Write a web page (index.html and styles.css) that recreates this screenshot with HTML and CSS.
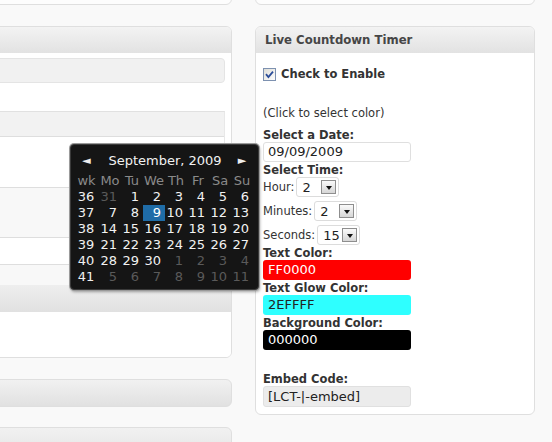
FILE: index.html
```html
<!DOCTYPE html>
<html>
<head>
<meta charset="utf-8">
<link rel="stylesheet" href="styles.css">
</head>
<body>
<div class="page">
  <div class="col col-left">
    <div class="panel panel-stub"></div>
    <div class="panel panel-b">
      <div class="panel-head"></div>
      <div class="panel-inner">
        <div class="field-box"></div>
        <div class="grid-table">
          <div class="gt-head"></div>
          <div class="gt-row r1"></div>
          <div class="gt-row r2 alt"></div>
          <div class="gt-row r3"></div>
          <div class="gt-row r4 alt"></div>
        </div>
      </div>
      <div class="panel-subhead"></div>
      <div class="panel-foot"></div>
    </div>
    <div class="panel panel-closed"></div>
    <div class="panel panel-closed panel-last"></div>
  </div>
  <div class="col col-right">
    <div class="panel panel-stub"></div>
    <div class="panel panel-timer">
      <div class="panel-head"><h3>Live Countdown Timer</h3></div>
      <div class="timer-body">
        <label class="check-row">
          <svg class="cb" width="13" height="13" viewBox="0 0 13 13">
            <defs><linearGradient id="cbg" x1="0" y1="0" x2="1" y2="1"><stop offset="0" stop-color="#dcdcd6"/><stop offset="1" stop-color="#ffffff"/></linearGradient></defs>
            <rect x="0.5" y="0.5" width="12" height="12" fill="url(#cbg)" stroke="#7d91b0"/>
            <path d="M3 6.2 L5.4 9 L10 3.6" fill="none" stroke="#2b4d99" stroke-width="1.8"/>
          </svg>
          <span>Check to Enable</span>
        </label>
        <p class="hint">(Click to select color)</p>
        <div class="lbl lbl-date">Select a Date:</div>
        <div class="txt">09/09/2009</div>
        <div class="lbl lbl-time">Select Time:</div>
        <div class="sel-row">
          <span class="sel-lbl">Hour:</span>
          <span class="sel"><span class="sel-val">2</span><span class="sel-btn"></span></span>
        </div>
        <div class="sel-row sel-gap">
          <span class="sel-lbl">Minutes:</span>
          <span class="sel"><span class="sel-val">2</span><span class="sel-btn"></span></span>
        </div>
        <div class="sel-row sel-gap">
          <span class="sel-lbl">Seconds:</span>
          <span class="sel"><span class="sel-val">15</span><span class="sel-btn"></span></span>
        </div>
        <div class="lbl lbl-c">Text Color:</div>
        <div class="txt swatch red">FF0000</div>
        <div class="lbl lbl-c">Text Glow Color:</div>
        <div class="txt swatch cyan">2EFFFF</div>
        <div class="lbl lbl-c">Background Color:</div>
        <div class="txt swatch black">000000</div>
        <div class="lbl lbl-embed">Embed Code:</div>
        <div class="txt embed">[LCT-|-embed]</div>
      </div>
    </div>
  </div>
</div>

<div class="datepicker">
  <div class="dp-title">
    <span class="dp-nav">&#9668;</span>
    <span class="dp-month">September, 2009</span>
    <span class="dp-nav">&#9658;</span>
  </div>
  <div class="dp-grid">
    <span class="h">wk</span><span class="h">Mo</span><span class="h">Tu</span><span class="h">We</span><span class="h">Th</span><span class="h">Fr</span><span class="h">Sa</span><span class="h">Su</span>

    <span class="wk">36</span><span class="d o">31</span><span class="d">1</span><span class="d">2</span><span class="d">3</span><span class="d">4</span><span class="d">5</span><span class="d">6</span>
    <span class="wk">37</span><span class="d">7</span><span class="d">8</span><span class="d sel-day">9</span><span class="d">10</span><span class="d">11</span><span class="d">12</span><span class="d">13</span>
    <span class="wk">38</span><span class="d">14</span><span class="d">15</span><span class="d">16</span><span class="d">17</span><span class="d">18</span><span class="d">19</span><span class="d">20</span>
    <span class="wk">39</span><span class="d">21</span><span class="d">22</span><span class="d">23</span><span class="d">24</span><span class="d">25</span><span class="d">26</span><span class="d">27</span>
    <span class="wk">40</span><span class="d">28</span><span class="d">29</span><span class="d">30</span><span class="d o">1</span><span class="d o">2</span><span class="d o">3</span><span class="d o">4</span>
    <span class="wk">41</span><span class="d o">5</span><span class="d o">6</span><span class="d o">7</span><span class="d o">8</span><span class="d o">9</span><span class="d o">10</span><span class="d o">11</span>
  </div>
</div>
</body>
</html>
```
FILE: styles.css
```css
html, body {
  margin: 0;
  padding: 0;
}
body {
  background: #f9f9f9;
  font-family: "DejaVu Sans", Verdana, sans-serif;
  color: #333;
  width: 552px;
  height: 442px;
  overflow: hidden;
  position: relative;
}
.page {
  display: flex;
  gap: 23px;
  margin-left: -20px;
  margin-top: -30px;
}
.col-left { width: 252px; flex: none; }
.col-right { width: 280px; flex: none; }

.panel {
  box-sizing: border-box;
  background: #fff;
  border: 1px solid #dfdfdf;
  border-radius: 6px;
  overflow: hidden;
}
.panel-stub {
  height: 35px;
  background: #fdfdfd;
}
.panel-b, .panel-timer, .panel-closed { margin-top: 21px; }

.panel-head {
  height: 26px;
  background: linear-gradient(#f3f3f3, #e2e2e2);
  box-sizing: border-box;
}
.panel-head h3 {
  margin: 0;
  padding: 0 0 0 9px;
  font-size: 11.7px;
  line-height: 26px;
  font-weight: bold;
  color: #464646;
}

/* left panel */
.panel-inner {
  padding: 5px 6px 0 10px;
}
.field-box {
  height: 25px;
  box-sizing: border-box;
  background: #f1f1f1;
  border: 1px solid #e4e4e4;
  border-radius: 4px;
}
.grid-table {
  margin-top: 28px;
  border-top: 1px solid #e1e1e1;
  border-right: 1px solid #e8e8e8;
}
.gt-head { height: 24px; background: #f2f2f2; }
.gt-row { box-sizing: border-box; border-top: 1px solid #dedede; background: #fff; }
.gt-row.alt { background: #f8f8f8; }
.r1 { height: 51px; }
.r2 { height: 50px; }
.r3 { height: 27px; }
.r4 { height: 21px; }
.panel-subhead {
  height: 27px;
  background: linear-gradient(#eeeeee, #e1e1e1);
}
.panel-foot { height: 45px; background: #fff; }

.panel-closed {
  height: 28px;
  background: linear-gradient(#f1f1f1, #e1e1e1);
}
.panel-closed.panel-last {
  margin-top: 20px;
  height: 40px;
}

/* timer panel */
.timer-body {
  padding: 14px 0 7px 7px;
  font-size: 11.5px;
}
.check-row {
  display: flex;
  align-items: center;
  height: 14px;
  gap: 5px;
  font-weight: bold;
  color: #333;
}
.cb { display: block; flex: none; }
.hint {
  margin: 25px 0 0 0;
  line-height: 14px;
  color: #333;
}
.lbl {
  font-weight: bold;
  line-height: 14px;
  color: #333;
}
.lbl-date { margin-top: 8px; }
.lbl-time { margin-top: 1px; }
.lbl-c { margin-top: 1px; }
.lbl-embed { margin-top: 22px; }

.txt {
  box-sizing: border-box;
  width: 148px;
  height: 20px;
  border: 1px solid #dfdfdf;
  border-radius: 3px;
  background: #fff;
  font-size: 13px;
  line-height: 18px;
  padding-left: 4px;
  color: #222;
}
.swatch { border-color: transparent; }
.red { background: #ff0000; color: #fff; }
.cyan { background: #2effff; color: #222; }
.black { background: #000; color: #fff; }
.embed {
  height: 21px;
  line-height: 19px;
  background: #ececec;
  border-color: #e0e0e0;
  color: #222;
}

.sel-row {
  display: flex;
  align-items: center;
  gap: 2px;
  height: 20px;
}
.sel-gap { margin-top: 4px; }
.sel-lbl { color: #333; }
.sel {
  box-sizing: border-box;
  width: 43px;
  height: 20px;
  border: 1px solid #dcdcdc;
  border-radius: 3px;
  background: #fff;
  display: flex;
  align-items: center;
  justify-content: space-between;
  padding: 0 2px 0 5px;
}
.sel-val {
  font-size: 13px;
  color: #222;
}
.sel-btn {
  box-sizing: border-box;
  width: 15px;
  height: 14px;
  border: 1px solid #8e8e8e;
  background: linear-gradient(#fafafa, #d6d6d6);
  position: relative;
  flex: none;
}
.sel-btn::after {
  content: "";
  position: absolute;
  left: 3.5px;
  top: 5px;
  border-left: 3.5px solid transparent;
  border-right: 3.5px solid transparent;
  border-top: 4px solid #111;
}

/* date picker overlay */
.datepicker {
  position: absolute;
  left: 70px;
  top: 144px;
  width: 189px;
  height: 146px;
  box-sizing: border-box;
  background: #151515;
  border: 1px solid #3a3a3a;
  border-radius: 4px;
  box-shadow: 0 0 0 1px #9a9a9a, 1px 2px 3px rgba(0, 0, 0, 0.35);
  padding: 8px 0 0 3px;
  font-size: 13px;
  color: #f2f2f2;
}
.dp-title {
  display: grid;
  grid-template-columns: 25px 132px 22px;
  height: 16px;
  line-height: 16px;
  margin-bottom: 4px;
}
.dp-nav {
  text-align: center;
  font-size: 11px;
  color: #eee;
}
.dp-month { text-align: center; }
.dp-grid {
  display: grid;
  grid-template-columns: 25px repeat(7, 22px);
  grid-auto-rows: 16px;
  line-height: 16px;
}
.h {
  text-align: center;
  color: #8a8a8a;
}
.wk { text-align: center; color: #f0f0f0; padding-right: 1px; }
.d {
  text-align: right;
  padding-right: 4px;
}
.d.o { color: #5a5a5a; }
.sel-day { background: #1f6ca7; color: #fff; }
```
